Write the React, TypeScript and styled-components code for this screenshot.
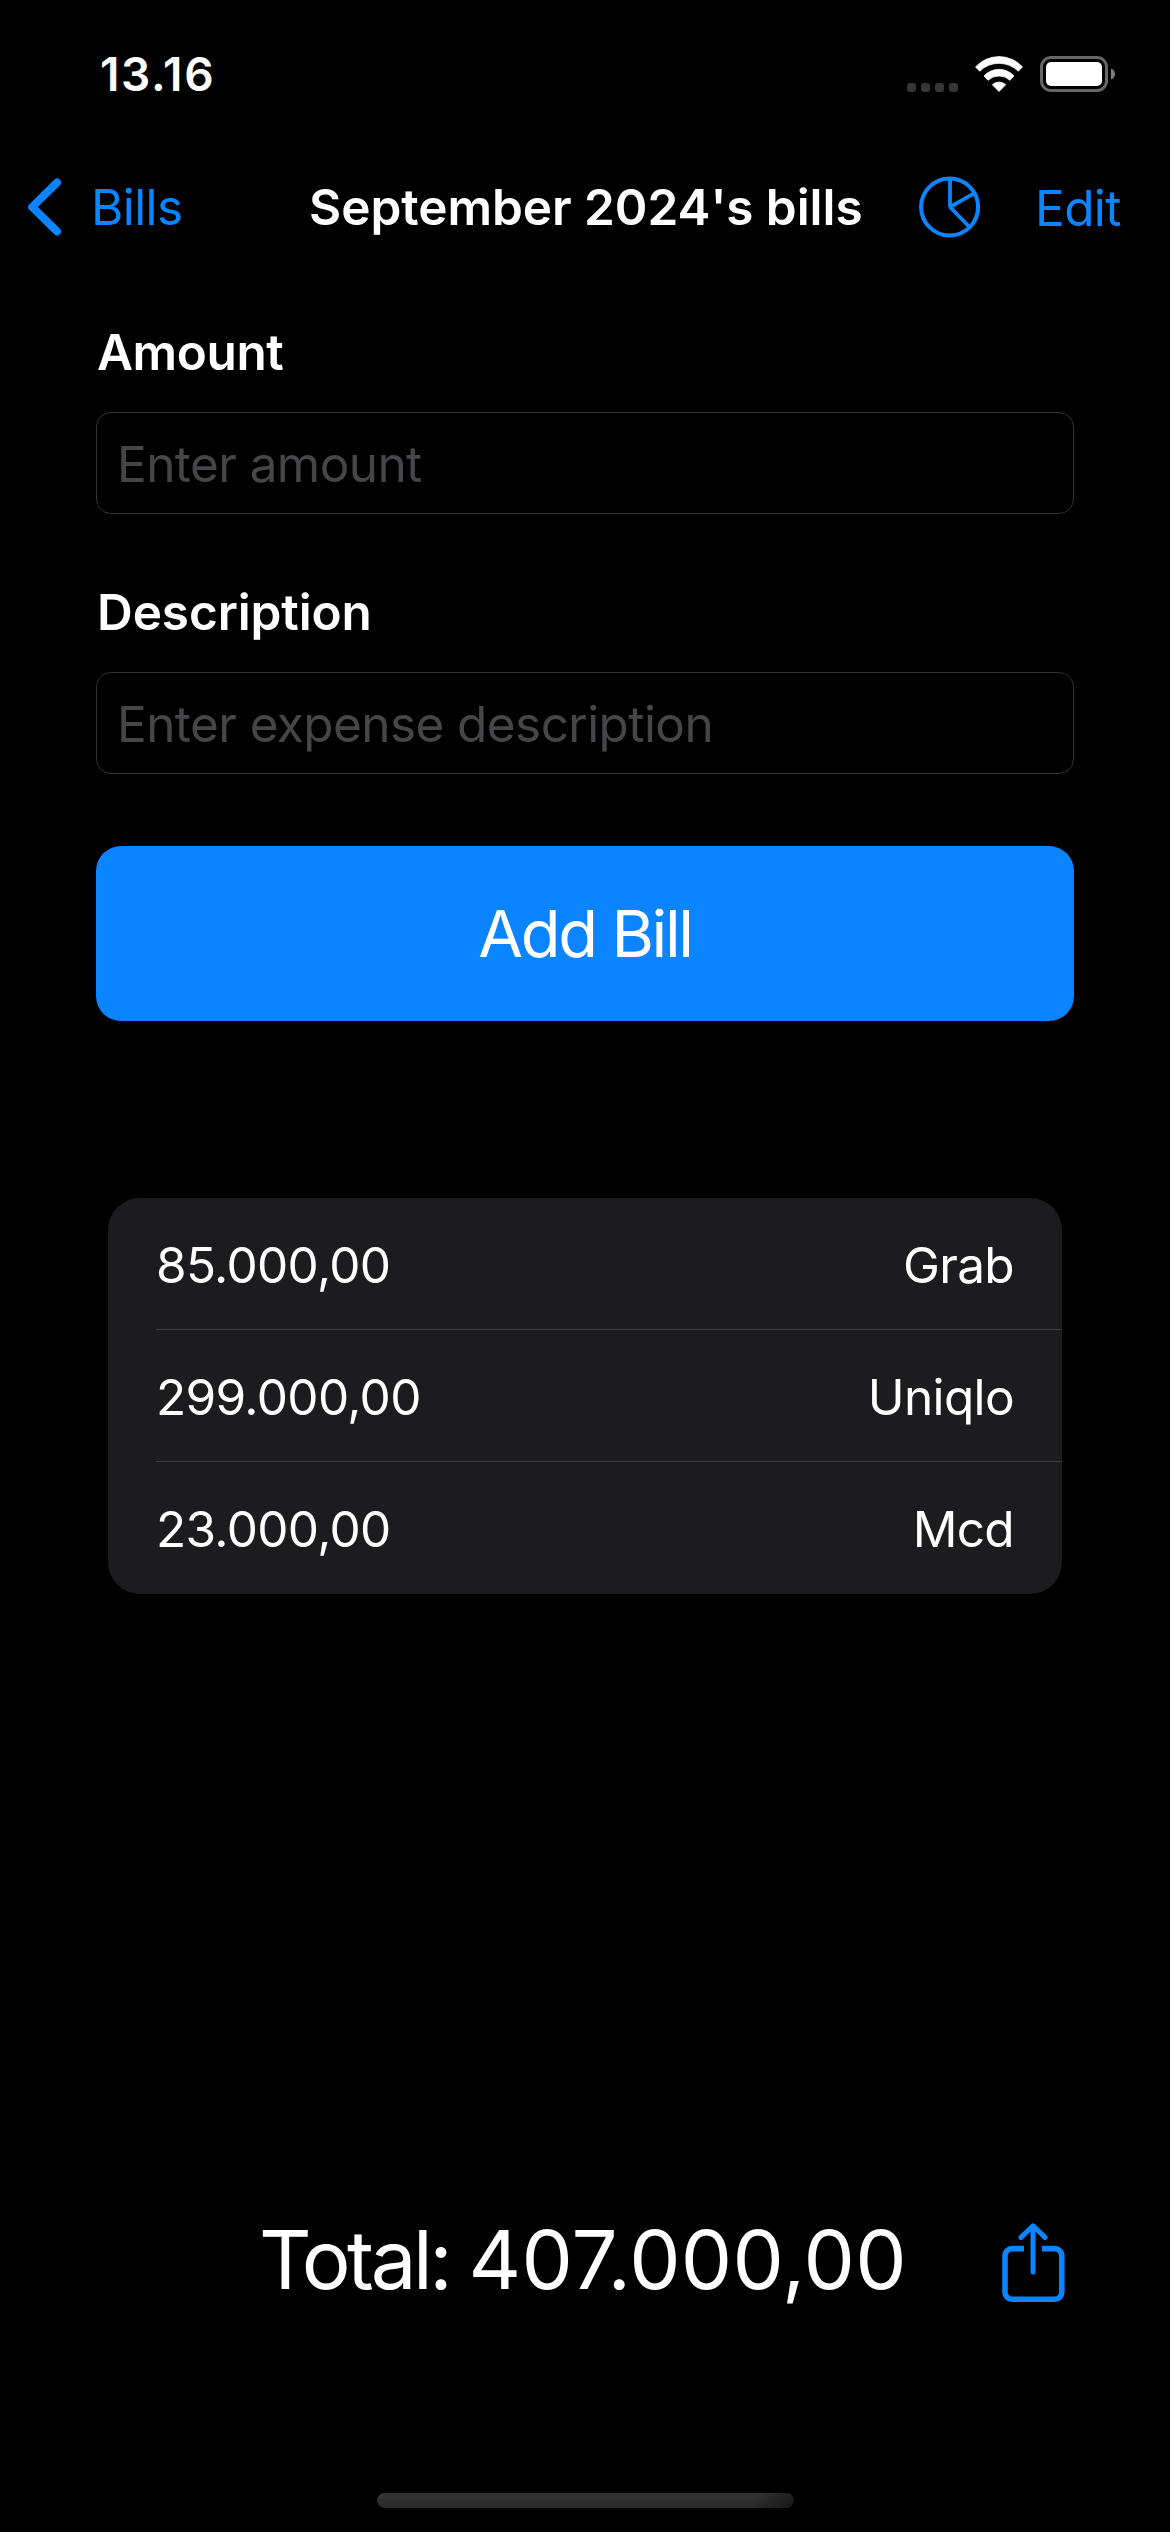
import React from "react";
import styled, { createGlobalStyle } from "styled-components";

const BLUE = "#0a84ff";

const GlobalStyle = createGlobalStyle`
  * { box-sizing: border-box; }
  body { margin: 0; background: #000; }
`;

const Screen = styled.main`
  display: flex;
  flex-direction: column;
  width: 1170px;
  height: 2532px;
  overflow: hidden;
  background: #000;
  color: #fff;
  font-family: Inter, "Liberation Sans", sans-serif;
  font-size: 49.5px;
  line-height: 60px;
`;

const StatusBar = styled.header`
  display: flex;
  align-items: center;
  justify-content: space-between;
  flex: none;
  height: 141px;
  padding: 7px 55px 0 100px;
`;

const Clock = styled.time`
  font-size: 46px;
  font-weight: 600;
  letter-spacing: 1.6px;
`;

const StatusIcons = styled.div`
  display: flex;
  align-items: center;
`;

const Dots = styled.div`
  display: flex;
  gap: 5px;
  margin: 26px 17px 0 0;
`;

const Dot = styled.span`
  width: 9px;
  height: 9px;
  border-radius: 3px;
  background: #363636;
`;

const NavBar = styled.nav`
  display: grid;
  grid-template-columns: 281px 610px 1fr;
  align-items: center;
  flex: none;
  height: 132px;
  padding-left: 28px;
`;

const TextButton = styled.button<{ $drop?: number }>`
  display: flex;
  align-items: center;
  gap: 29px;
  padding: ${(p) => p.$drop ?? 0}px 0 0;
  border: 0;
  background: none;
  color: ${BLUE};
  font: inherit;
  letter-spacing: -0.6px;
`;

const Title = styled.h1`
  margin: 0;
  font-size: inherit;
  font-weight: 600;
  letter-spacing: -0.04px;
  white-space: nowrap;
`;

const NavActions = styled.div`
  display: flex;
  align-items: center;
  gap: 54px;
`;

const IconButton = styled.button`
  display: flex;
  padding: 0;
  border: 0;
  background: none;
  color: ${BLUE};
`;

const Form = styled.form`
  display: flex;
  flex-direction: column;
  flex: none;
  padding: 49px 96px 0;
`;

const Field = styled.label`
  display: flex;
  flex-direction: column;
  gap: 30px;
  margin-bottom: 68px;
`;

const FieldLabel = styled.span<{ $tracking: number }>`
  padding-left: 1px;
  font-weight: 600;
  letter-spacing: ${(p) => p.$tracking}px;
`;

const TextInput = styled.input`
  width: 100%;
  height: 102px;
  padding: 2px 20px 0;
  border: 1px solid #333336;
  border-radius: 15px;
  outline: 0;
  background: #000;
  color: #fff;
  font: inherit;
  letter-spacing: -0.58px;

  &::placeholder {
    color: #464649;
    opacity: 1;
  }
`;

const AddButton = styled.button`
  height: 175px;
  margin-top: 4px;
  padding: 0;
  border: 0;
  border-radius: 25px;
  background: ${BLUE};
  color: #fff;
  font: inherit;
  font-size: 65px;
  letter-spacing: -2.4px;
`;

const BillList = styled.ul`
  flex: none;
  margin: 177px 108px 0;
  padding: 0 0 0 48px;
  border-radius: 32px;
  background: #1c1c1e;
  list-style: none;
`;

const BillRow = styled.li`
  display: flex;
  align-items: center;
  justify-content: space-between;
  height: 132px;
  padding: 3px 48px 0 0;
  border-bottom: 1px solid #3e3e42;

  &:last-child {
    border-bottom-color: transparent;
  }
`;

const BillText = styled.span`
  letter-spacing: -0.65px;
`;

const Footer = styled.footer`
  display: flex;
  align-items: center;
  justify-content: space-between;
  flex: none;
  height: 100px;
  margin-top: auto;
  padding: 0 105px 0 259px;
`;

const Total = styled.strong`
  font-size: 81.5px;
  font-weight: 400;
  letter-spacing: 0.2px;
  white-space: nowrap;
`;

const TotalCaption = styled.span`
  letter-spacing: -3.5px;
`;

const ShareButton = styled(IconButton)`
  margin-top: 6px;
`;

const HomeIndicator = styled.div`
  flex: none;
  align-self: center;
  width: 417px;
  height: 15px;
  margin: 183px 0 24px;
  border-radius: 8px;
  background: linear-gradient(100deg, transparent 90%, rgba(0, 0, 0, 0.45)),
    linear-gradient(#353535, #282828);
`;

const WifiIcon = styled.svg`
  margin-right: 17px;
`;

const Wifi = () => (
  <WifiIcon width="48" height="36" viewBox="0 0 48 36" fill="#fff" stroke="#fff" strokeWidth="0.8" strokeLinejoin="round">
    <path d="M.5 10.9A32 32 0 0 1 47.5 10.9L43.3 15.2A27.6 27.6 0 0 0 4.7 15.2Z" />
    <path d="M9 19.9A20.5 20.5 0 0 1 39 19.9L35 24.3A16 16 0 0 0 13 24.3Z" />
    <path d="M17.3 28.7A10 10 0 0 1 30.7 28.7L24 35.5Z" />
  </WifiIcon>
);

const BatteryIcon = () => (
  <svg width="75" height="36" viewBox="0 0 75 36">
    <rect x="1.5" y="1.5" width="65" height="33" rx="9.5" fill="none" stroke="#666" strokeWidth="3" />
    <rect x="6" y="6" width="56" height="24" rx="5" fill="#fff" />
    <path d="M71 12.5C76.3 14.5 76.3 21.5 71 23.5Z" fill="#7f7f7f" />
  </svg>
);

const BackIcon = () => (
  <svg width="34" height="58" viewBox="0 0 34 58" fill="none" stroke="currentColor" strokeWidth="8" strokeLinecap="round" strokeLinejoin="round">
    <path d="M29 4.6L4.2 29L29 53.4" />
  </svg>
);

const PieIcon = () => (
  <svg width="62" height="62" viewBox="0 0 62 62" fill="none" stroke="currentColor" strokeWidth="4.1" strokeLinejoin="bevel">
    <circle cx="30.6" cy="31" r="28.5" />
    <path d="M31 2.5V31L54.7 17.6M31 31L50.2 50.8" strokeWidth="3.8" />
  </svg>
);

const ShareIcon = () => (
  <svg width="63" height="80" viewBox="0 0 63 80" fill="none" stroke="currentColor" strokeWidth="5.6">
    <path d="M22 25.6H10A7 7 0 0 0 3 32.6V69.2A7 7 0 0 0 10 76.2H52.8A7 7 0 0 0 59.8 69.2V32.6A7 7 0 0 0 52.8 25.6H40" />
    <path d="M31 3.2V49M19 14.4L31 2.8L43 14.4" strokeWidth="5" strokeLinecap="round" strokeLinejoin="round" />
  </svg>
);

const bills = [
  { amount: "85.000,00", name: "Grab" },
  { amount: "299.000,00", name: "Uniqlo" },
  { amount: "23.000,00", name: "Mcd" },
];

export default function App() {
  return (
    <>
      <GlobalStyle />
      <Screen>
        <StatusBar>
          <Clock>13.16</Clock>
          <StatusIcons>
            <Dots>
              <Dot />
              <Dot />
              <Dot />
              <Dot />
            </Dots>
            <Wifi />
            <BatteryIcon />
          </StatusIcons>
        </StatusBar>
        <NavBar>
          <TextButton type="button">
            <BackIcon />
            Bills
          </TextButton>
          <Title>September 2024's bills</Title>
          <NavActions>
            <IconButton type="button" aria-label="Chart">
              <PieIcon />
            </IconButton>
            <TextButton type="button" $drop={2}>
              Edit
            </TextButton>
          </NavActions>
        </NavBar>
        <Form>
          <Field>
            <FieldLabel $tracking={-0.4}>Amount</FieldLabel>
            <TextInput placeholder="Enter amount" />
          </Field>
          <Field>
            <FieldLabel $tracking={-0.1}>Description</FieldLabel>
            <TextInput placeholder="Enter expense description" />
          </Field>
          <AddButton type="button">Add Bill</AddButton>
        </Form>
        <BillList>
          {bills.map((bill) => (
            <BillRow key={bill.name}>
              <BillText>{bill.amount}</BillText>
              <BillText>{bill.name}</BillText>
            </BillRow>
          ))}
        </BillList>
        <Footer>
          <Total>
            <TotalCaption>Total: </TotalCaption>
            407.000,00
          </Total>
          <ShareButton type="button" aria-label="Share">
            <ShareIcon />
          </ShareButton>
        </Footer>
        <HomeIndicator />
      </Screen>
    </>
  );
}
